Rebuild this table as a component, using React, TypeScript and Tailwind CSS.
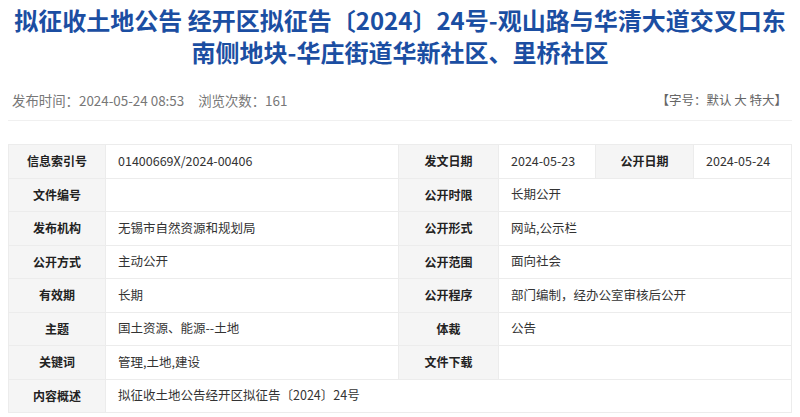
import React from "react";

const font = { fontFamily: '"Noto Sans CJK SC", "Noto Sans", sans-serif' };

function Label({ children }: { children?: React.ReactNode }) {
  return (
    <div className="h-[32.5px] bg-[#f5f5f5] flex items-center justify-center text-[12px] font-bold text-[#222]">
      {children}
    </div>
  );
}

function Value({ children, span }: { children?: React.ReactNode; span?: string }) {
  return (
    <div className={`h-[32.5px] bg-white flex items-center pl-[12px] text-[12.5px] text-[#333] ${span ?? ""}`}>
      {children}
    </div>
  );
}

export default function App() {
  return (
    <div className="w-[800px] h-[417px] bg-white overflow-hidden" style={font}>
      {/* 标题 */}
      <h1 className="pt-[4px] text-center text-[24px] leading-[32px] font-bold text-[#1b4ea2]">
        <span className="block whitespace-nowrap">拟征收土地公告 经开区拟征告〔2024〕24号-观山路与华清大道交叉口东</span>
        <span className="block whitespace-nowrap">南侧地块-华庄街道华新社区、里桥社区</span>
      </h1>

      <div className="mx-[8px] mt-[22px] pb-[10px] px-[4px] flex items-center justify-between border-b border-[#f0f0f0] leading-[20px]">
        <div className="text-[13.4px] text-[#777] flex gap-[14px]">
          <span>发布时间：2024-05-24 08:53</span>
          <span>浏览次数：161</span>
        </div>
        <div className="text-[12.5px] text-[#666] pr-[1px]">【字号：默认 大 特大】</div>
      </div>

      {/* 信息表 */}
      <div className="mx-[8px] mt-[23px] grid grid-cols-[96px_292px_99px_96px_97px_97px] gap-px bg-[#ececec] border border-[#ececec]">
        <Label>信息索引号</Label>
        <Value>01400669X/2024-00406</Value>
        <Label>发文日期</Label>
        <Value>2024-05-23</Value>
        <Label>公开日期</Label>
        <Value>2024-05-24</Value>

        <Label>文件编号</Label>
        <Value></Value>
        <Label>公开时限</Label>
        <Value span="col-span-3">长期公开</Value>

        <Label>发布机构</Label>
        <Value>无锡市自然资源和规划局</Value>
        <Label>公开形式</Label>
        <Value span="col-span-3">网站,公示栏</Value>

        <Label>公开方式</Label>
        <Value>主动公开</Value>
        <Label>公开范围</Label>
        <Value span="col-span-3">面向社会</Value>

        <Label>有效期</Label>
        <Value>长期</Value>
        <Label>公开程序</Label>
        <Value span="col-span-3">部门编制，经办公室审核后公开</Value>

        <Label>主题</Label>
        <Value>国土资源、能源--土地</Value>
        <Label>体裁</Label>
        <Value span="col-span-3">公告</Value>

        <Label>关键词</Label>
        <Value>管理,土地,建设</Value>
        <Label>文件下载</Label>
        <Value span="col-span-3"></Value>

        <Label>内容概述</Label>
        <Value span="col-span-5">拟征收土地公告经开区拟征告〔2024〕24号</Value>
      </div>
    </div>
  );
}
